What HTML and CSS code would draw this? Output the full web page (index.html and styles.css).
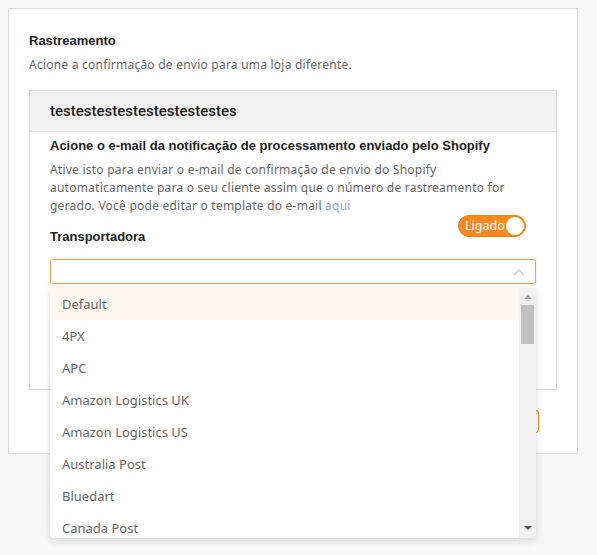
FILE: index.html
```html
<!DOCTYPE html>
<html lang="pt">
<head>
<meta charset="utf-8">
<title>Rastreamento</title>
<link rel="stylesheet" href="styles.css">
</head>
<body>
<div class="card">
  <h2 class="title">Rastreamento</h2>
  <p class="subtitle">Acione a confirmação de envio para uma loja diferente.</p>
  <div class="store">
    <div class="store-head">testestestestestestestestes</div>
    <div class="store-body">
      <h3 class="opt-title">Acione o e-mail da notificação de processamento enviado pelo Shopify</h3>
      <p class="opt-desc">Ative isto para enviar o e-mail de confirmação de envio do Shopify automaticamente para o seu cliente assim que o número de rastreamento for gerado. Você pode editar o template do e-mail <a class="link" href="#">aqui</a></p>
      <div class="carrier-row">
        <span class="carrier-label">Transportadora</span>
        <span class="toggle"><span class="toggle-text">Ligado</span><span class="knob"></span></span>
      </div>
      <div class="select">
        <svg class="caret" width="12" height="8" viewBox="0 0 12 8"><path d="M1 7 L6 2 L11 7" fill="none" stroke="#c8c8c8" stroke-width="1.2"/></svg>
      </div>
      <div class="spacer"></div>
    </div>
  </div>
  <div class="footer"><button class="save">Salvar</button></div>

  <div class="dropdown">
    <ul class="options">
      <li class="opt active">Default</li>
      <li class="opt">4PX</li>
      <li class="opt">APC</li>
      <li class="opt">Amazon Logistics UK</li>
      <li class="opt">Amazon Logistics US</li>
      <li class="opt">Australia Post</li>
      <li class="opt">Bluedart</li>
      <li class="opt">Canada Post</li>
    </ul>
    <div class="scrollbar">
      <span class="arrow up"></span>
      <span class="thumb"></span>
      <span class="arrow down"></span>
    </div>
  </div>
</div>
</body>
</html>
```
FILE: styles.css
```css
html, body { margin: 0; padding: 0; }
html { height: 100%; background: #f7f7f7; }
body {
  box-sizing: border-box;
  min-height: 555px;
  height: 100%;
  background: #f7f7f7;
  padding: 8px 20px 0 8px;
  font-family: "Noto Sans", "Open Sans", sans-serif;
}
.card {
  position: relative;
  width: 528px;
  height: 444px;
  background: #fff;
  border: 1px solid #dcdcdc;
  padding: 0 20px;
}
.title {
  margin: 24px 0 0;
  font-family: "Liberation Sans", Arial, sans-serif;
  font-size: 13px;
  font-weight: 700;
  color: #222;
  line-height: 16px;
}
.subtitle {
  margin: 8px 0 0;
  font-size: 12px;
  color: #666;
  line-height: 16px;
  letter-spacing: 0.23px;
}
.store {
  margin-top: 17px;
  border: 1px solid #dcdcdc;
}
.store-head {
  height: 40px;
  background: #f0f0f0;
  border-bottom: 1px solid #dcdcdc;
  padding: 0 20px;
  display: flex;
  align-items: center;
  font-family: Roboto, "Liberation Sans", Arial, sans-serif;
  font-size: 15px;
  font-weight: 500;
  color: #222;
}
.store-body {
  padding: 5px 20px 0;
}
.opt-title {
  margin: 0;
  font-family: "Liberation Sans", Arial, sans-serif;
  font-size: 13px;
  font-weight: 700;
  color: #222;
  line-height: 18px;
}
.opt-desc {
  margin: 6px 0 0;
  max-width: 462px;
  font-size: 12px;
  color: #666;
  line-height: 18px;
  letter-spacing: 0.23px;
}
.link { color: #8aa4d6; text-decoration: none; }
.carrier-row {
  display: flex;
  justify-content: space-between;
  align-items: flex-start;
  padding-right: 10px;
}
.carrier-label {
  margin-top: 14px;
  font-family: "Liberation Sans", Arial, sans-serif;
  font-size: 13px;
  font-weight: 700;
  color: #222;
  line-height: 16px;
}
.toggle {
  margin-top: 0;
  width: 68px;
  height: 22px;
  box-sizing: border-box;
  border-radius: 11px;
  background: #f7891f;
  border: 1px solid #ef7f14;
  display: flex;
  align-items: center;
  justify-content: space-between;
  padding: 0 1px 0 6px;
}
.toggle-text {
  color: #fff;
  font-size: 12.5px;
  line-height: 14px;
}
.knob {
  width: 18px;
  height: 18px;
  border-radius: 50%;
  background: #fff;
}
.select {
  margin-top: 14px;
  height: 25px;
  box-sizing: border-box;
  border: 1px solid #f5a04d;
  border-radius: 3px;
  box-shadow: 0 0 2px rgba(245, 160, 77, 0.5);
  display: flex;
  align-items: center;
  justify-content: flex-end;
  padding-right: 10px;
}
.spacer { height: 105px; }
.footer {
  display: flex;
  justify-content: flex-end;
  padding-right: 18px;
  margin-top: 20px;
}
.save {
  width: 80px;
  height: 23px;
  border: 1px solid #f7891f;
  border-radius: 3px;
  background: #fff;
  color: #f7891f;
  font-family: "Noto Sans", sans-serif;
  font-size: 12px;
}
.dropdown {
  position: absolute;
  left: 41px;
  top: 279px;
  width: 486px;
  height: 250px;
  background: #fff;
  box-shadow: 0 2px 8px rgba(0, 0, 0, 0.15);
  border-radius: 0 0 4px 4px;
  display: flex;
  overflow: hidden;
}
.options {
  list-style: none;
  margin: 0;
  padding: 0;
  flex: 1;
}
.opt {
  height: 32px;
  display: flex;
  align-items: center;
  padding-left: 12px;
  font-size: 13px;
  color: #666;
}
.opt.active { background: #fdf8ee; }
.scrollbar {
  width: 17px;
  background: #f0f0f0;
  display: flex;
  flex-direction: column;
  align-items: center;
}
.arrow {
  width: 0;
  height: 0;
  border-left: 4px solid transparent;
  border-right: 4px solid transparent;
}
.arrow.up { border-bottom: 4px solid #a3a3a3; margin-top: 7px; }
.arrow.down { border-top: 4px solid #505050; margin-top: auto; margin-bottom: 8px; }
.thumb {
  width: 13px;
  height: 39px;
  background: #c1c1c1;
  margin-top: 6px;
}
```
